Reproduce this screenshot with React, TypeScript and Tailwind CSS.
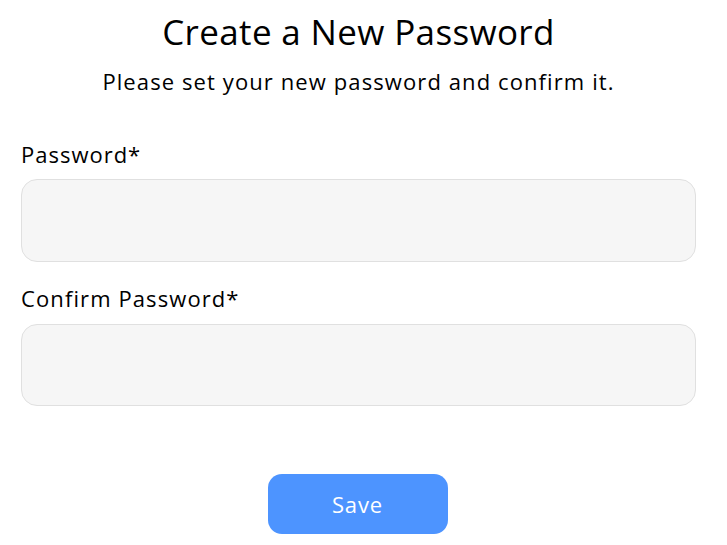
export default function App() {
  return (
    <div className="min-h-screen bg-white font-['Open_Sans',sans-serif] text-black">
      <div className="w-[675px] ml-[21px] flex flex-col">
        <h1 className="mt-[12px] text-center text-[35px] leading-[40px] font-normal tracking-[0.01em]">
          Create a New Password
        </h1>
        <p className="mt-[15px] text-center text-[22px] leading-[28px] tracking-[0.05em]">
          Please set your new password and confirm it.
        </p>

        <label className="mt-[45px] text-[22px] leading-[28px] tracking-[0.045em]">Password*</label>
        <input
          type="password"
          className="mt-[11px] h-[83px] rounded-[16px] border border-[#e0e0e0] bg-[#f6f6f6] px-4 outline-none"
        />

        <label className="mt-[22px] text-[22px] leading-[28px] tracking-[0.05em]">Confirm Password*</label>
        <input
          type="password"
          className="mt-[12px] h-[82px] rounded-[16px] border border-[#e0e0e0] bg-[#f6f6f6] px-4 outline-none"
        />

        <div className="mt-[68px] flex justify-center pr-[2px]">
          <button className="w-[180px] h-[60px] rounded-[14px] bg-[#4d94ff] text-white text-[22px] font-medium tracking-[0.04em]">
            Save
          </button>
        </div>
      </div>
    </div>
  );
}
